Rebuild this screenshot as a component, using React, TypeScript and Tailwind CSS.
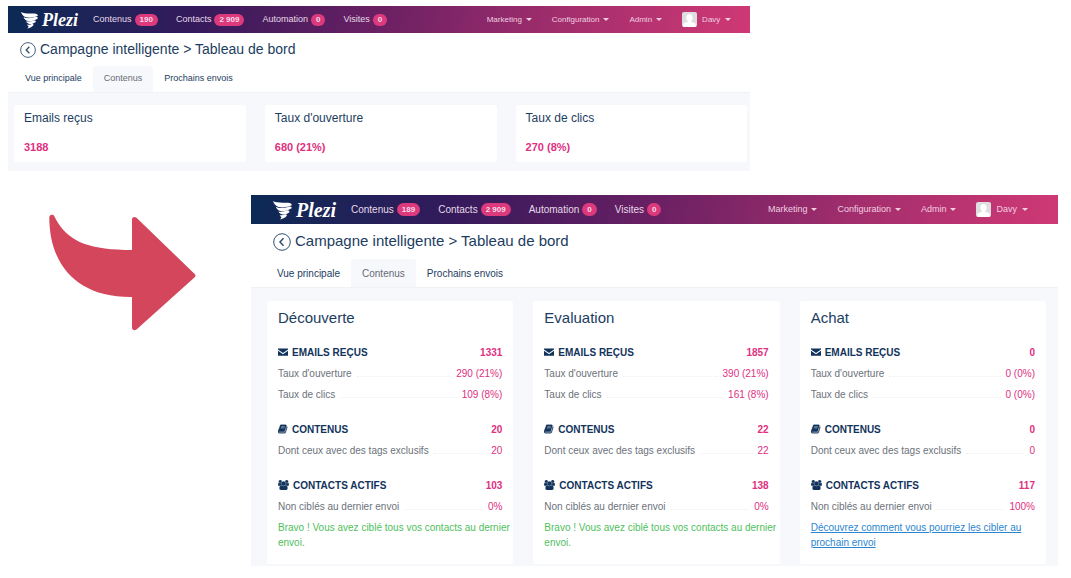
import React from 'react';
import clsx from 'clsx';

type Size = 'sm' | 'lg';

const navItems = ['Marketing', 'Configuration', 'Admin'];
const tabs = ['Vue principale', 'Contenus', 'Prochains envois'];

const summary = [
  { label: 'Emails reçus', value: '3188' },
  { label: "Taux d'ouverture", value: '680 (21%)' },
  { label: 'Taux de clics', value: '270 (8%)' },
];

const stages = [
  { title: 'Découverte', emails: '1331', opens: '290 (21%)', clicks: '109 (8%)', contents: '20', tagged: '20', contacts: '103', missed: '0%', done: true },
  { title: 'Evaluation', emails: '1857', opens: '390 (21%)', clicks: '161 (8%)', contents: '22', tagged: '22', contacts: '138', missed: '0%', done: true },
  { title: 'Achat', emails: '0', opens: '0 (0%)', clicks: '0 (0%)', contents: '0', tagged: '0', contacts: '117', missed: '100%', done: false },
];

const EnvelopeIcon = () => (
  <svg viewBox="0 0 20 20" className="w-[10px] h-[10px]" fill="currentColor" aria-hidden="true">
    <path d="M0 3h20v2.200L10 12 0 5.200z" />
    <path d="M0 7.600l10 6.800 10-6.800V17.500H0z" />
  </svg>
);

const BookIcon = () => (
  <svg viewBox="0 0 1792 1792" className="w-[10px] h-[10px]" fill="currentColor" aria-hidden="true">
    <path d="M1639 478q40 57 18 129l-275 906q-19 64-76.5 107.5t-122.5 43.5h-923q-77 0-148.5-53.5t-99.5-131.5q-24-67-2-127 0-4 3-27t4-37q1-8-3-21.5t-3-19.5q2-11 8-21t16.5-23.5 16.5-23.5q23-38 45-91.5t30-91.5q3-10 .5-30t-.5-28q3-11 17-28t17-23q21-36 42-92t25-90q1-9-2.5-32t.5-28q4-13 22-30.5t22-22.5q19-26 42.5-84.5t27.5-96.5q1-8-3-25.5t-2-26.5q2-8 9-18t18-23 17-21q8-12 16.5-30.5t15-35 16-36 19.5-32 26.5-23.5 36-11.500 47.500 5.500l-1 3q38-9 51-9h761q74 0 114 56t18 130l-274 906q-36 119-71.500 153.500t-128.500 34.500h-869q-27 0-38 15-11 16-1 43 24 70 144 70h923q29 0 56-15.500t35-41.500l300-987q7-22 5-57 38 15 59 43zm-1064 2q-4 13 2 22.500t20 9.500h608q13 0 25.500-9.500t16.500-22.500l21-64q4-13-2-22.500t-20-9.500h-608q-13 0-25.500 9.500t-16.500 22.500zm-83 256q-4 13 2 22.500t20 9.500h608q13 0 25.500-9.500t16.500-22.500l21-64q4-13-2-22.500t-20-9.500h-608q-13 0-25.500 9.500t-16.500 22.500z" stroke="currentColor" strokeWidth="50" />
  </svg>
);

const UsersIcon = () => (
  <svg viewBox="-64 0 1920 1792" className="w-[11px] h-[10px]" fill="currentColor" aria-hidden="true">
    <path d="M529 896q-162 5-265 128h-134q-82 0-138-40.5t-56-118.500q0-353 124-353 6 0 43.500 21t97.500 42.500 119 21.500q67 0 133-23-5 37-5 66 0 139 81 256zm1071 637q0 120-73 189.500t-194 69.500h-874q-121 0-194-69.500t-73-189.500q0-53 3.500-103.500t14-109 26.500-108.500 43-97.500 62-81 85.500-53.500 111.500-20q10 0 43 21.500t73 48 107 48 135 21.500 135-21.500 107-48 73-48 43-21.500q61 0 111.500 20t85.500 53.500 62 81 43 97.500 26.500 108.500 14 109 3.500 103.500zm-1024-1277q0 106-75 181t-181 75-181-75-75-181 75-181 181-75 181 75 75 181zm704 384q0 159-112.500 271.500t-271.500 112.500-271.500-112.500-112.500-271.500 112.500-271.500 271.500-112.500 271.500 112.500 112.500 271.500zm576 225q0 78-56 118.500t-138 40.500h-134q-103-123-265-128 81-117 81-256 0-29-5-66 66 23 133 23 59 0 119-21.500t97.500-42.500 43.500-21q124 0 124 353zm-128-609q0 106-75 181t-181 75-181-75-75-181 75-181 181-75 181 75 75 181z" stroke="currentColor" strokeWidth="60" />
  </svg>
);

const Caret = () => (
  <svg viewBox="0 0 6 3" className="w-[6px] h-[3px]" fill="currentColor" aria-hidden="true">
    <path d="M0 0h6L3 3z" />
  </svg>
);

const Avatar = () => (
  <svg viewBox="0 0 16 16" className="w-[15px] h-[15px] rounded-[2px]" aria-hidden="true">
    <rect width="16" height="16" fill="#dedede" />
    <path d="M8 2.200c2.200 0 3.400 1.500 3.400 3.600 0 1.800-.7 3-1.600 3.900v.8l3.600 1.300c.8.400 1.200 1 1.300 2.200V16H1.300v-2c.1-1.200.5-1.800 1.300-2.200l3.600-1.300v-.8C5.300 8.800 4.600 7.600 4.600 5.800 4.600 3.700 5.800 2.200 8 2.200z" fill="#fff" />
  </svg>
);

const Logo = ({ size }: { size: Size }) => (
  <a href="#" className="flex items-center gap-[3px]" aria-label="Plezi">
    <svg viewBox="0 0 36 36" className={size === 'sm' ? 'w-[18px] h-[18px]' : 'w-[20px] h-[20px]'} fill="#fff" aria-hidden="true">
      <path d="M0 2C7 6 17 4.500 27 5c4.500.3 6.500 2 7 4.500-6 3-17 5-24 3C5 11 1.500 7 0 2z" />
      <path d="M5 12c6 3.500 15 3 24-.5 3 0 5 1.200 5 3-5 4-14 7-20 5.500-5-1-7.500-4-9-8z" />
      <path d="M10 20.500c5 1 11 .2 16-2 2.500 0 4 1.500 3.500 3.500-4 3-8 4.500-12 4-3-.5-6.500-2.500-7.500-5.500z" />
      <path d="M12 27c3.500.8 7 .3 10.500-1.500 2 .2 3 1.500 2.300 3-2.500 3-6 5.500-12.300 6.500 1.500-1.500 2.500-2.800 2.800-4-1.500-.8-2.500-2-3.300-4z" />
    </svg>
    <span
      className={clsx(
        "font-['Liberation_Serif',serif] font-bold italic",
        size === 'sm' ? 'text-[18px] leading-[20px]' : 'text-[20px] leading-[22px]'
      )}
    >
      Plezi
    </span>
  </a>
);

const TopBar = ({ size, contents }: { size: Size; contents: string }) => {
  const sm = size === 'sm';
  const links = [
    { label: 'Contenus', count: contents },
    { label: 'Contacts', count: '2 909' },
    { label: 'Automation', count: '0' },
    { label: 'Visites', count: '0' },
  ];

  return (
    <header
      className={clsx(
        'flex items-center justify-between bg-[linear-gradient(100deg,#0b2a55_0%,#341a5b_25%,#6a2063_50%,#a32e6d_75%,#cf3975_100%)]',
        sm ? 'h-[27px] pl-[13px] pr-[19px]' : 'h-[29px] pl-[22px] pr-[30px]'
      )}
    >
      <div className="flex items-center gap-[15px] text-white">
        <Logo size={size} />
        <nav className={clsx('flex items-center gap-[18px] text-[#e6d9e6]', sm ? 'text-[9px]' : 'text-[10px]')}>
          {links.map((link) => (
            <a key={link.label} href="#" className="flex items-center gap-[3px]">
              {link.label}
              <span
                className={clsx(
                  'rounded-full px-[5px] bg-[#dc3a7c] font-bold text-[8px] text-[#f9dcea]',
                  sm ? 'leading-[12px]' : 'leading-[13px]'
                )}
              >
                {link.count}
              </span>
            </a>
          ))}
        </nav>
      </div>
      <div className={clsx('flex items-center gap-[20px] text-[#f0cfe0]', sm ? 'text-[8px]' : 'text-[9px]')}>
        {navItems.map((item) => (
          <button key={item} type="button" className="flex items-center gap-[4px]">
            {item}
            <Caret />
          </button>
        ))}
        <button type="button" className="flex items-center gap-[5px]">
          <Avatar />
          Davy
          <Caret />
        </button>
      </div>
    </header>
  );
};

const PageHead = ({ size }: { size: Size }) => {
  const sm = size === 'sm';

  return (
    <div className="bg-white border-b border-[#f0f2f6]">
      <div className={clsx('flex items-center gap-[4px]', sm ? 'h-[33px] pl-[12px]' : 'h-[35px] pl-[22px]')}>
        <a href="#" aria-label="Retour">
          <svg viewBox="0 0 18 18" className={sm ? 'w-[16px] h-[16px]' : 'w-[18px] h-[18px]'} fill="none" stroke="#31506f" aria-hidden="true">
            <circle cx="9" cy="9" r="8.300" strokeWidth="1" />
            <path d="M10.500 5.300 7 9l3.500 3.700" strokeWidth="1.500" />
          </svg>
        </a>
        <h1 className={clsx('text-[#1c3d61]', sm ? 'text-[14px]' : 'text-[15px]')}>
          Campagne intelligente &gt; Tableau de bord
        </h1>
      </div>
      <div className={clsx('flex', sm ? 'pl-[6px] text-[9px]' : 'pl-[15px] text-[10px]')}>
        {tabs.map((tab) => (
          <button
            key={tab}
            type="button"
            className={clsx(
              'rounded-t-[3px] px-[11px]',
              sm ? 'h-[26px]' : 'h-[28px]',
              tab === 'Contenus' ? 'bg-[#f7f8fc] text-[#666b73]' : 'text-[#1c3d61]'
            )}
          >
            {tab}
          </button>
        ))}
      </div>
    </div>
  );
};

const StatHead = ({ icon, label, value }: { icon: React.ReactNode; label: string; value: string }) => (
  <div className="flex items-center gap-[4px] h-[22px] font-bold text-[#12335b]">
    {icon}
    <h3 className="flex-1">{label}</h3>
    <span className="text-[#e0307f]">{value}</span>
  </div>
);

const StatRow = ({ label, value }: { label: string; value: string }) => (
  <div className="flex items-center gap-[5px] h-[21px] text-[#6c727b]">
    <span>{label}</span>
    <span className="flex-1 h-[6px] border-b border-dotted border-[#eceef1]" />
    <span className="text-[#e0307f]">{value}</span>
  </div>
);

const App: React.FC = () => {
  return (
    <main className="bg-white pl-[8px] pr-[13px] py-[6px] font-['Liberation_Sans',Arial,sans-serif]">
      <section className="w-[70.7%] bg-[#f7f8fc]">
        <TopBar size="sm" contents="190" />
        <PageHead size="sm" />
        <div className="grid grid-cols-3 gap-[19px] pl-[6px] pr-[3px] pt-[12px] pb-[9px]">
          {summary.map((item) => (
            <div key={item.label} className="bg-white rounded-[3px] px-[10px] pt-[4px] pb-[6px]">
              <h2 className="text-[12px] leading-[18px] text-[#1c3d61]">{item.label}</h2>
              <p className="mt-[11px] text-[11px] leading-[18px] font-bold text-[#e0307f]">{item.value}</p>
            </div>
          ))}
        </div>
      </section>

      <div className="flex items-start mt-[24px]">
        {/* Curved arrow from the old view to the new one */}
        <div className="w-[243px] shrink-0 pl-[41px] pt-[19px]">
          <svg viewBox="0 0 147 117" className="w-[147px] h-[117px]" fill="#d4465b" aria-hidden="true">
            <path d="M5.300 2.200C19 30 43 35.500 83 36V5.500C83 3 85.500 2.200 87.500 3.800L145.700 60Q147.300 61.700 145.700 63.200L87.500 115.500C85.500 117 83 116.200 83 113.500V83C28 83.500.5 51 .3 3.500.3.300 4 .2 5.300 2.200z" />
          </svg>
        </div>

        <section className="flex-1 min-w-0 bg-[#f7f8fc]">
          <TopBar size="lg" contents="189" />
          <PageHead size="lg" />
          <div className="grid grid-cols-3 gap-[20px] pl-[16px] pr-[12px] pt-[13px] pb-[2px]">
            {stages.map((stage) => (
              <article key={stage.title} className="bg-white rounded-[3px] px-[11px] pt-[7px] pb-[14px] text-[10px]">
                <h2 className="mb-[13px] text-[15px] leading-[20px] text-[#1c3d61]">{stage.title}</h2>
                <StatHead icon={<EnvelopeIcon />} label="EMAILS REÇUS" value={stage.emails} />
                <StatRow label="Taux d'ouverture" value={stage.opens} />
                <StatRow label="Taux de clics" value={stage.clicks} />
                <div className="mt-[13px]">
                  <StatHead icon={<BookIcon />} label="CONTENUS" value={stage.contents} />
                  <StatRow label="Dont ceux avec des tags exclusifs" value={stage.tagged} />
                </div>
                <div className="mt-[13px]">
                  <StatHead icon={<UsersIcon />} label="CONTACTS ACTIFS" value={stage.contacts} />
                  <StatRow label="Non ciblés au dernier envoi" value={stage.missed} />
                </div>
                <p className="mt-[3px] -mr-[11px] leading-[15px]">
                  {stage.done ? (
                    <span className="text-[#4fc05c]">Bravo ! Vous avez ciblé tous vos contacts au dernier envoi.</span>
                  ) : (
                    <a href="#" className="text-[#2b86cf] underline">
                      Découvrez comment vous pourriez les cibler au prochain envoi
                    </a>
                  )}
                </p>
              </article>
            ))}
          </div>
        </section>
      </div>
    </main>
  );
};

export default App;
